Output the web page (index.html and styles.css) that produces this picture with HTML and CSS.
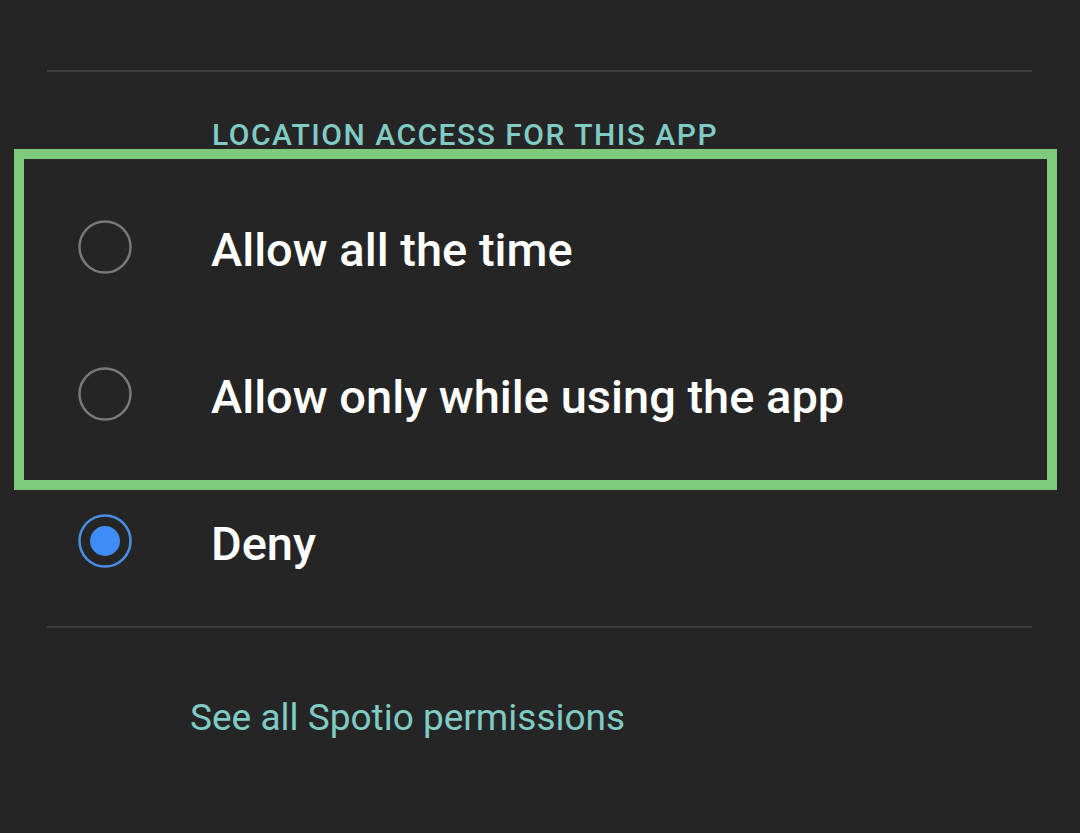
FILE: index.html
```html
<!DOCTYPE html>
<html lang="en">

<head>
    <meta charset="UTF-8">
    <meta name="viewport" content="width=device-width, initial-scale=1.0">
    <title>App permissions - Location</title>
    <link rel="stylesheet" href="styles.css">
</head>

<body>

    <div class="divider"></div>

    <div class="section-title">LOCATION ACCESS FOR THIS APP</div>

    <div class="options">
        <div class="highlight">
            <div class="option">
                <svg class="radio" width="54" height="54" viewBox="0 0 54 54">
                    <circle cx="27" cy="27" r="25.5" fill="none" stroke="#787878" stroke-width="2.5" />
                </svg>
                <span class="label">Allow all the time</span>
            </div>
            <div class="option">
                <svg class="radio" width="54" height="54" viewBox="0 0 54 54">
                    <circle cx="27" cy="27" r="25.5" fill="none" stroke="#787878" stroke-width="2.5" />
                </svg>
                <span class="label">Allow only while using the app</span>
            </div>
        </div>
        <div class="option">
            <svg class="radio" width="54" height="54" viewBox="0 0 54 54">
                <circle cx="27" cy="27" r="25.5" fill="none" stroke="#4a8fe4" stroke-width="2.5" />
                <circle cx="27" cy="27" r="15" fill="#3f8cf6" />
            </svg>
            <span class="label">Deny</span>
        </div>
    </div>

    <div class="divider divider-bottom"></div>

    <div class="link">See all Spotio permissions</div>

</body>

</html>
```

FILE: styles.css
```css
body {
    background-color: #252525;
    color: white;
    font-family: Roboto, "Noto Sans", sans-serif;
    margin: 0;
    height: 833px;
    overflow: hidden;
}

.divider {
    height: 2px;
    background: #3e3e3e;
    margin: 70px 48px 0 47px;
}

.section-title {
    margin: 43px 0 0 212px;
    font-size: 30px;
    line-height: 40px;
    font-weight: 500;
    letter-spacing: 1.5px;
    color: #80cbc4;
}

.options {
    margin-top: 18px;
}

/* green outline drawn over the first two choices */
.highlight {
    position: relative;
}

.highlight::after {
    content: "";
    position: absolute;
    top: -24px;
    bottom: -23px;
    left: 14px;
    right: 23px;
    border: 10px solid #7fc97a;
    pointer-events: none;
}

.option {
    height: 147px;
    display: flex;
    align-items: center;
    padding-left: 78px;
}

.radio {
    flex: none;
    display: block;
}

.label {
    margin-left: 79px;
    padding-top: 6px;
    font-size: 47px;
    font-weight: 500;
    line-height: 56px;
}

.divider-bottom {
    margin-top: 12px;
}

.link {
    margin: 66px 0 0 190px;
    font-size: 37px;
    line-height: 48px;
    color: #80cbc4;
}
```
